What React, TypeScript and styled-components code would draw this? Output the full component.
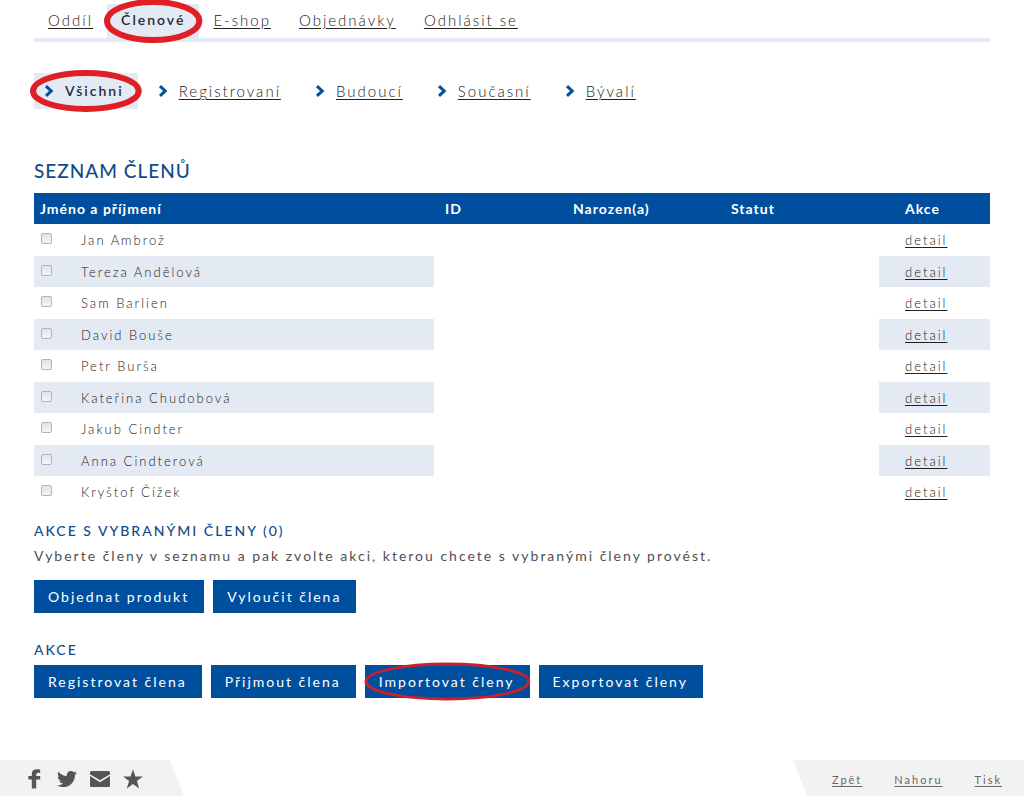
import React, { useState } from "react";
import styled, { createGlobalStyle, css } from "styled-components";
import { FaTwitter } from "react-icons/fa";

const blue = "#004f9e";
const headingBlue = "#134b8a";
const pale = "#e4eaf3";
const ink = "#505050";

const GlobalStyle = createGlobalStyle`
  *, *::before, *::after { box-sizing: border-box; }
  body {
    margin: 0;
    background: #fff;
    color: ${ink};
    font-family: Lato, "Open Sans", sans-serif;
    font-size: 14px;
    font-weight: 400;
    line-height: 20px;
    letter-spacing: 2px;
  }
`;

const Page = styled.div`
  display: flex;
  flex-direction: column;
  min-height: 100vh;
`;

const Content = styled.main`
  padding: 4px 34px 0;
`;

const MainNav = styled.nav`
  display: flex;
  border-bottom: 4px solid ${pale};
`;

const SubNav = styled.nav`
  display: flex;
  gap: 10px;
  margin-top: 31px;
`;

const linkText = css<{ $active?: boolean }>`
  position: relative;
  color: ${(p) => (p.$active ? "#222b38" : "#222")};
  background: ${(p) => (p.$active ? pale : "transparent")};
  font-size: ${(p) => (p.$active ? 14 : 15)}px;
  font-weight: ${(p) => (p.$active ? 600 : 300)};
  text-decoration: ${(p) => (p.$active ? "none" : "underline")};
  text-underline-offset: 2px;
`;

const MainLink = styled.a<{ $active?: boolean }>`
  ${linkText}
  padding: 6px 14px 8px;
`;

const SubLink = styled.a<{ $active?: boolean }>`
  ${linkText}
  display: flex;
  align-items: center;
  gap: 11px;
  height: 36px;
  padding: 0 14px 0 10px;
`;

const Ring = styled.svg<{ $y: number; $x: number }>`
  position: absolute;
  z-index: 1;
  top: ${(p) => -p.$y}px;
  left: ${(p) => -p.$x}px;
  width: calc(100% + ${(p) => 2 * p.$x}px);
  height: calc(100% + ${(p) => 2 * p.$y}px);
  overflow: visible;
  pointer-events: none;
`;

const Title = styled.h1`
  margin: 50px 0 10px;
  color: ${headingBlue};
  font-size: 19px;
  line-height: 24px;
  font-weight: 500;
  letter-spacing: 1px;
`;

const Subtitle = styled.h2`
  margin: 0 0 5px;
  color: ${headingBlue};
  font-size: 14px;
  line-height: 20px;
  font-weight: 500;
`;

const Section = styled.section`
  margin-top: 13px;
`;

const ActionSection = styled.section`
  margin-top: 27px;
`;

const Hint = styled.p`
  margin: 0 0 14px;
`;

const Table = styled.table`
  width: 100%;
  table-layout: fixed;
  border-collapse: collapse;
`;

const Col = styled.col<{ $width?: number }>`
  width: ${(p) => (p.$width ? `${p.$width}px` : "auto")};
`;

const Head = styled.th<{ $pad?: number }>`
  height: 31px;
  padding: 0 0 0 ${(p) => p.$pad ?? 11}px;
  background: ${blue};
  color: #fff;
  font-size: 14px;
  font-weight: 700;
  letter-spacing: 1px;
  text-align: left;
`;

const Cell = styled.td<{ $pad: number; $striped?: boolean }>`
  height: ${(p) => (p.$striped ? 31 : 32)}px;
  padding: 0 0 0 ${(p) => p.$pad}px;
  background: ${(p) => (p.$striped ? pale : "#fff")};
  color: #222;
  font-size: 13px;
  font-weight: 300;
`;

const Blank = styled.td`
  padding: 0;
`;

const Check = styled.input`
  appearance: none;
  display: block;
  width: 11px;
  height: 11px;
  margin: 0 0 3px 1px;
  border: 1px solid #b4b4b4;
  border-radius: 2px;
  background: linear-gradient(#e4e4e4, #f4f4f4);
  &:checked { background: ${blue}; }
`;

const Detail = styled.a`
  color: #222;
  text-underline-offset: 2px;
`;

const Buttons = styled.div`
  display: flex;
  flex-wrap: wrap;
  gap: 9px;
`;

const Button = styled.button`
  position: relative;
  height: 33px;
  padding: 0 15px 0 14px;
  border: 0;
  background: ${blue};
  color: #fff;
  font: inherit;
  letter-spacing: inherit;
`;

const Footer = styled.footer`
  display: flex;
  justify-content: space-between;
  height: 36px;
  margin-top: auto;
`;

const Social = styled.div`
  display: flex;
  align-items: center;
  gap: 13px;
  width: 184px;
  padding: 2px 0 0 24px;
  background: #f2f2f2;
  clip-path: polygon(0 0, 170px 0, 100% 100%, 0 100%);
`;

const SocialLink = styled.a`
  display: flex;
  justify-content: center;
  width: 20px;
  color: #555;
`;

const PageLinks = styled.nav`
  display: flex;
  align-items: center;
  gap: 32px;
  padding: 3px 22px 0 39px;
  background: #f2f2f2;
  clip-path: polygon(0 0, 100% 0, 100% 100%, 14px 100%);
`;

const PageLink = styled.a`
  color: #666;
  font-size: 11px;
  text-underline-offset: 2px;
`;

const Ellipse = ({ x, y, stroke, color }: { x: number; y: number; stroke: number; color: string }) => (
  <Ring $x={x} $y={y} aria-hidden="true">
    <ellipse cx="50%" cy="50%" rx="50%" ry="50%" fill="none" stroke={color} strokeWidth={stroke} />
  </Ring>
);

const Chevron = () => (
  <svg width="10" height="12" viewBox="0 0 10 12" aria-hidden="true">
    <path d="M2 1.2 7.2 6 2 10.8" fill="none" stroke={blue} strokeWidth="3" />
  </svg>
);

const Facebook = () => (
  <svg width="13" height="20" viewBox="0 0 13 20" fill="currentColor" aria-hidden="true">
    <path d="M12.2.4v3.4h-2Q8.2 3.8 8.2 5.4v1.7h4v3.4h-4V19.6H3.8v-9.1H.4V7.1h3.4V4.9Q3.8.3 9 .3q2 0 3.2.1Z" />
  </svg>
);

const Envelope = () => (
  <svg width="20" height="16" viewBox="0 0 20 16" fill="currentColor" aria-hidden="true">
    <path d="M1.6 0h16.8Q20 0 20 1.6v1.6L10 9.3 0 3.2V1.6Q0 0 1.6 0Z" />
    <path d="M0 5.1 10 11.3 20 5.1v9.3q0 1.6-1.6 1.6H1.6Q0 16 0 14.4Z" />
  </svg>
);

const Star = () => (
  <svg width="20" height="20" viewBox="0 0 20 20" fill="currentColor" aria-hidden="true">
    <path d="M10 .3 12.4 7.4H20L13.9 12l2.3 7.4L10 14.9l-6.2 4.5L6.1 12 0 7.4h7.6Z" />
  </svg>
);

const mainLinks = ["Oddíl", "Členové", "E-shop", "Objednávky", "Odhlásit se"];
const filters = ["Všichni", "Registrovaní", "Budoucí", "Současní", "Bývalí"];
const members = [
  "Jan Ambrož",
  "Tereza Andělová",
  "Sam Barlien",
  "David Bouše",
  "Petr Burša",
  "Kateřina Chudobová",
  "Jakub Cindter",
  "Anna Cindterová",
  "Kryštof Čížek",
];

export default function App() {
  const [selected, setSelected] = useState<string[]>([]);
  const toggle = (name: string) =>
    setSelected((s) => (s.includes(name) ? s.filter((n) => n !== name) : [...s, name]));

  return (
    <Page>
      <GlobalStyle />
      <Content>
        <MainNav>
          {mainLinks.map((label) => (
            <MainLink key={label} href="#" $active={label === "Členové"}>
              {label}
              {label === "Členové" && <Ellipse x={0} y={2} stroke={6} color="#df1e26" />}
            </MainLink>
          ))}
        </MainNav>
        <SubNav>
          {filters.map((label) => (
            <SubLink key={label} href="#" $active={label === "Všichni"}>
              <Chevron />
              {label}
              {label === "Všichni" && <Ellipse x={1} y={0} stroke={6} color="#df1e26" />}
            </SubLink>
          ))}
        </SubNav>

        <Title>SEZNAM ČLENŮ</Title>
        <Table>
          <colgroup>
            <Col $width={41} />
            <Col />
            <Col $width={128} />
            <Col $width={158} />
            <Col $width={159} />
            <Col $width={111} />
          </colgroup>
          <thead>
            <tr>
              <Head colSpan={2} $pad={6}>Jméno a příjmení</Head>
              <Head>ID</Head>
              <Head>Narozen(a)</Head>
              <Head>Statut</Head>
              <Head $pad={26}>Akce</Head>
            </tr>
          </thead>
          <tbody>
            {members.map((name, i) => (
              <tr key={name}>
                <Cell $pad={6} $striped={i % 2 === 1}>
                  <Check
                    type="checkbox"
                    id={`member-${i}`}
                    checked={selected.includes(name)}
                    onChange={() => toggle(name)}
                  />
                </Cell>
                <Cell $pad={6} $striped={i % 2 === 1}>
                  <label htmlFor={`member-${i}`}>{name}</label>
                </Cell>
                <Blank colSpan={3} />
                <Cell $pad={26} $striped={i % 2 === 1}>
                  <Detail href="#">detail</Detail>
                </Cell>
              </tr>
            ))}
          </tbody>
        </Table>

        <Section>
          <Subtitle>AKCE S VYBRANÝMI ČLENY ({selected.length})</Subtitle>
          <Hint>Vyberte členy v seznamu a pak zvolte akci, kterou chcete s vybranými členy provést.</Hint>
          <Buttons>
            <Button type="button">Objednat produkt</Button>
            <Button type="button">Vyloučit člena</Button>
          </Buttons>
        </Section>
        <ActionSection>
          <Subtitle>AKCE</Subtitle>
          <Buttons>
            <Button type="button">Registrovat člena</Button>
            <Button type="button">Přijmout člena</Button>
            <Button type="button">
              Importovat členy
              <Ellipse x={-1} y={1} stroke={3} color="#c8202f" />
            </Button>
            <Button type="button">Exportovat členy</Button>
          </Buttons>
        </ActionSection>
      </Content>

      <Footer>
        <Social>
          <SocialLink href="#" aria-label="Facebook"><Facebook /></SocialLink>
          <SocialLink href="#" aria-label="Twitter"><FaTwitter size={20} /></SocialLink>
          <SocialLink href="#" aria-label="E-mail"><Envelope /></SocialLink>
          <SocialLink href="#" aria-label="Oblíbené"><Star /></SocialLink>
        </Social>
        <PageLinks>
          <PageLink href="#">Zpět</PageLink>
          <PageLink href="#">Nahoru</PageLink>
          <PageLink href="#">Tisk</PageLink>
        </PageLinks>
      </Footer>
    </Page>
  );
}
